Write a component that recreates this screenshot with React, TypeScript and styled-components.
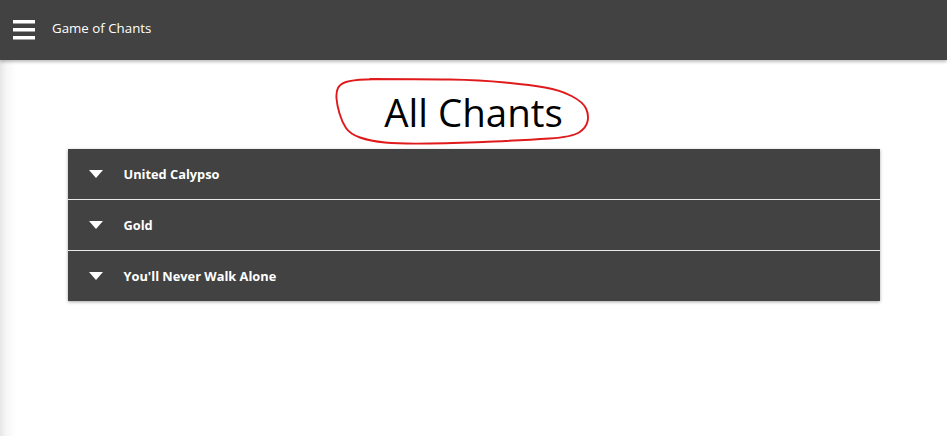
import { FC } from 'react';
import styled, { createGlobalStyle } from 'styled-components';

const GlobalStyle = createGlobalStyle`
  html, body {
    margin: 0;
    padding: 0;
    background: #fff;
    font-family: 'Open Sans', 'Noto Sans', sans-serif;
  }
`;

const chants = ['United Calypso', 'Gold', "You'll Never Walk Alone"];

// hand-drawn loop around the heading, traced from the screenshot
const loop: [number, number][] = [
  [40, 4], [90, 4], [150, 5], [200, 10], [230, 15], [253, 27], [259, 40],
  [256, 53], [242, 62], [197, 65], [130, 68], [70, 69], [40, 66], [20, 59],
  [12, 47], [7, 30], [6, 17], [10, 9], [22, 5], [50, 4],
];

const smoothPath = (pts: [number, number][]) => {
  const mid = (a: [number, number], b: [number, number]) => [(a[0] + b[0]) / 2, (a[1] + b[1]) / 2];
  let d = `M ${pts[0][0]} ${pts[0][1]}`;
  for (let i = 1; i < pts.length - 1; i++) {
    const [mx, my] = mid(pts[i], pts[i + 1]);
    d += ` Q ${pts[i][0]} ${pts[i][1]} ${mx} ${my}`;
  }
  const last = pts[pts.length - 1];
  return `${d} L ${last[0]} ${last[1]}`;
};

const MenuIcon: FC = () => (
  <svg width="22" height="20" viewBox="0 0 22 20">
    <rect x="0" y="0" width="22" height="3.5" fill="#fff" />
    <rect x="0" y="8" width="22" height="3.5" fill="#fff" />
    <rect x="0" y="16" width="22" height="3.5" fill="#fff" />
  </svg>
);

const Caret: FC = () => (
  <svg width="14" height="8" viewBox="0 0 14 8">
    <path d="M0 0 L14 0 L7 8 Z" fill="#fff" />
  </svg>
);

const Scribble: FC = () => (
  <ScribbleSvg width="265" height="75" viewBox="0 0 265 75">
    <path d={smoothPath(loop)} fill="none" stroke="#e0191b" strokeWidth="1.9" strokeLinecap="round" />
  </ScribbleSvg>
);

const App: FC = () => (
  <Page>
    <GlobalStyle />
    <TopBar>
      <MenuIcon />
      <AppTitle>Game of Chants</AppTitle>
    </TopBar>
    <Content>
      <TitleWrap>
        <Heading>All Chants</Heading>
        <Scribble />
      </TitleWrap>
      <Accordion>
        {chants.map((name) => (
          <Row key={name}>
            <Caret />
            <RowLabel>{name}</RowLabel>
          </Row>
        ))}
      </Accordion>
    </Content>
  </Page>
);

export default App;

const Page = styled.div`
  min-height: 436px;
  background: linear-gradient(to right, #e6e6e6 0px, #f6f6f6 6px, #fff 16px);
`;

const TopBar = styled.header`
  height: 60px;
  background: #424242;
  display: flex;
  align-items: center;
  padding-left: 13px;
  box-shadow: 0 2px 3px rgba(0, 0, 0, 0.25);
  position: relative;
`;

const AppTitle = styled.span`
  color: #fff;
  font-size: 13.3px;
  margin-left: 17px;
  margin-top: -4px;
`;

const Content = styled.main`
  display: flex;
  flex-direction: column;
  align-items: center;
  padding-top: 20px;
`;

const TitleWrap = styled.div`
  position: relative;
  display: flex;
  justify-content: center;
  width: 265px;
  height: 69px;
`;

const Heading = styled.h1`
  margin: 0;
  margin-top: 4px;
  font-size: 38.5px;
  font-weight: 400;
  color: #000;
  line-height: 56px;
`;

const ScribbleSvg = styled.svg`
  position: absolute;
  left: -11px;
  top: -5px;
`;

const Accordion = styled.section`
  width: 812px;
  background: #424242;
  box-shadow: 0 1px 3px rgba(0, 0, 0, 0.35);
`;

const Row = styled.div`
  height: 50px;
  display: flex;
  align-items: center;
  padding-left: 21px;
  border-top: 1px solid #e8e8e8;
  &:first-child {
    border-top: none;
  }
`;

const RowLabel = styled.span`
  color: #fff;
  font-weight: 700;
  font-size: 12.8px;
  margin-left: 21px;
`;
